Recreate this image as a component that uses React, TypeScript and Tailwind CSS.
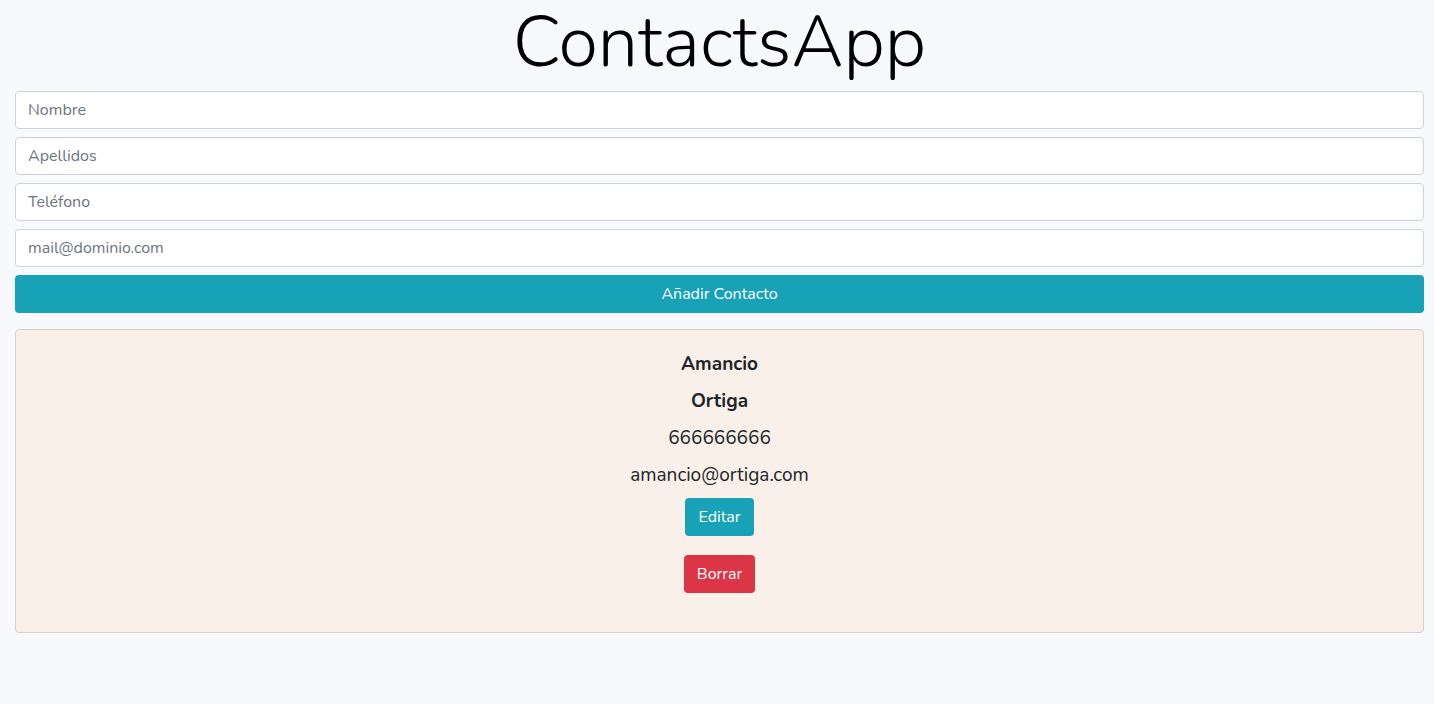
import { useState } from 'react';

const font = { fontFamily: 'Nunito, Lato, "Noto Sans", sans-serif' };

export default function App() {
  const [form, setForm] = useState({ nombre: '', apellidos: '', telefono: '', email: '' });

  const fields: { key: keyof typeof form; placeholder: string }[] = [
    { key: 'nombre', placeholder: 'Nombre' },
    { key: 'apellidos', placeholder: 'Apellidos' },
    { key: 'telefono', placeholder: 'Teléfono' },
    { key: 'email', placeholder: 'mail@dominio.com' },
  ];

  return (
    <div className="min-h-[704px] bg-[#f8f9fa] text-[#212529]" style={font}>
      <div className="pl-[15px] pr-[10px]">
        {/* Title */}
        <h1 className="text-center text-[72px] font-light leading-[85px] text-black mb-[6px]">ContactsApp</h1>

        {/* Form */}
        <form className="flex flex-col gap-2" onSubmit={(e) => e.preventDefault()}>
          {fields.map((f) => (
            <input
              key={f.key}
              value={form[f.key]}
              onChange={(e) => setForm({ ...form, [f.key]: e.target.value })}
              placeholder={f.placeholder}
              className="h-[38px] w-full rounded-[4px] border border-[#ced4da] bg-white px-3 text-base text-[#495057] placeholder:text-[#6c757d] outline-none"
            />
          ))}
          <button
            type="submit"
            className="h-[38px] w-full rounded-[4px] bg-[#17a2b8] text-base text-white"
          >
            Añadir Contacto
          </button>
        </form>

        {/* Contact card */}
        <div className="mt-4 flex flex-col items-center rounded-[4px] border border-[#d6d0cb] bg-[#f8f0e9] pt-[16px] pb-[39px]">
          <div className="text-[19px] font-bold leading-[37px]">Amancio</div>
          <div className="text-[19px] font-bold leading-[37px]">Ortiga</div>
          <div className="text-[19px] leading-[37px]">666666666</div>
          <div className="text-[19px] leading-[37px]">amancio@ortiga.com</div>
          <button className="mt-[4px] h-[38px] rounded-[4px] bg-[#17a2b8] px-[13px] text-base text-white">Editar</button>
          <button className="mt-[19px] h-[38px] rounded-[4px] bg-[#dc3545] px-[13px] text-base text-white">Borrar</button>
        </div>
      </div>
    </div>
  );
}
